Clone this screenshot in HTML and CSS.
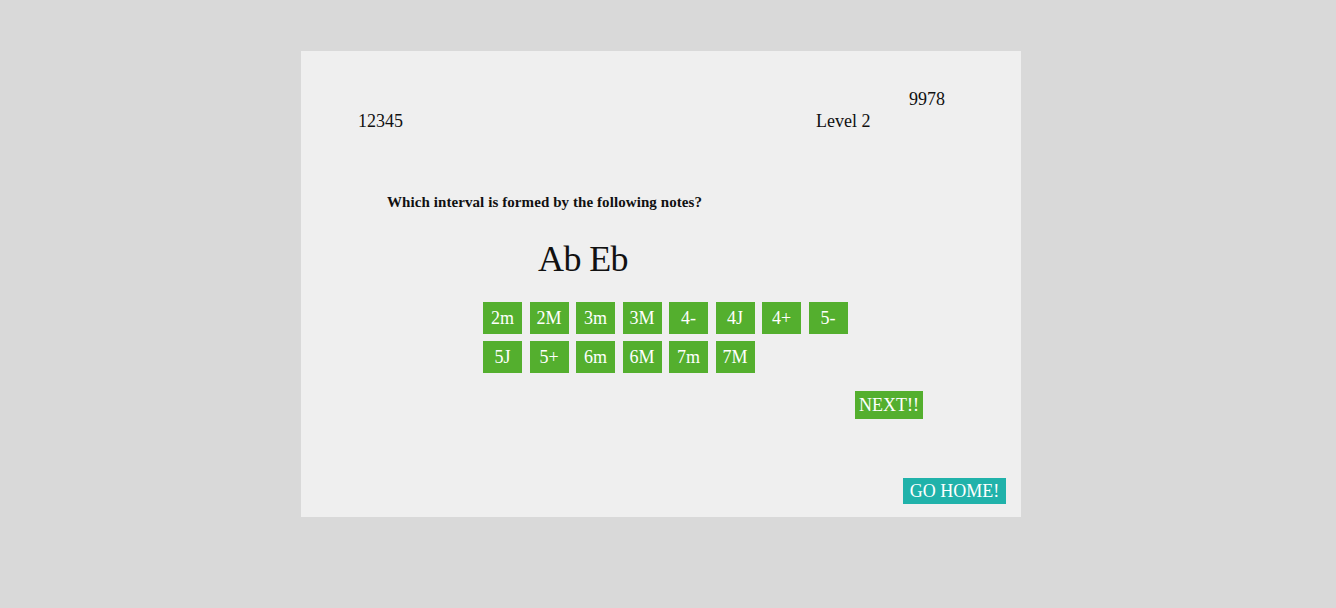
FILE: index.html
```html
<!DOCTYPE html>
<html>
<head>
<meta charset="utf-8">
<link rel="stylesheet" href="styles.css">
</head>
<body>
<div class="card">
  <div class="header">
    <div class="score">12345</div>
    <div class="level">Level 2</div>
    <div class="best">9978</div>
  </div>
  <div class="question">Which interval is formed by the following notes?</div>
  <div class="notes">Ab Eb</div>
  <div class="answers">
    <div class="btn">2m</div>
    <div class="btn">2M</div>
    <div class="btn">3m</div>
    <div class="btn">3M</div>
    <div class="btn">4-</div>
    <div class="btn">4J</div>
    <div class="btn">4+</div>
    <div class="btn">5-</div>
    <div class="btn">5J</div>
    <div class="btn">5+</div>
    <div class="btn">6m</div>
    <div class="btn">6M</div>
    <div class="btn">7m</div>
    <div class="btn">7M</div>
  </div>
  <div class="next-row"><div class="next">NEXT!!</div></div>
  <div class="home-row"><div class="home">GO HOME!</div></div>
</div>
</body>
</html>
```
FILE: styles.css
```css
html, body {
  margin: 0;
  padding: 0;
}
body {
  background: #d9d9d9;
  font-family: "Liberation Serif", "Times New Roman", serif;
  color: #111;
  height: 608px;
}
.card {
  margin: 51px 0 0 301px;
  width: 720px;
  height: 466px;
  box-sizing: border-box;
  background: #efefef;
  padding-top: 38px;
  display: flex;
  flex-direction: column;
}
.header {
  display: flex;
  align-items: flex-end;
  font-size: 18px;
  line-height: 21px;
  padding-left: 57px;
}
.score {
  width: 458px;
}
.level {
  width: 93px;
}
.best {
  align-self: flex-start;
  margin-bottom: 22px;
}
.question {
  margin: 62px 0 0 86px;
  font-weight: bold;
  font-size: 15px;
  line-height: 17px;
  letter-spacing: 0.08px;
}
.notes {
  margin: 28px 0 0 237px;
  font-size: 36px;
  line-height: 41px;
  letter-spacing: -0.6px;
}
.answers {
  margin: 22px 0 0 182px;
  width: 370px;
  display: flex;
  flex-wrap: wrap;
  column-gap: 7.5px;
  row-gap: 7px;
}
.btn {
  width: 39px;
  height: 32px;
  background: #54af2e;
  color: #fff;
  font-size: 18px;
  display: flex;
  align-items: center;
  justify-content: center;
}
.next-row {
  margin: 18px 0 0 554px;
}
.next {
  display: inline-block;
  width: 68px;
  height: 28px;
  line-height: 28px;
  text-align: center;
  background: #54af2e;
  color: #fff;
  font-size: 18px;
}
.home-row {
  margin-top: auto;
  margin-bottom: 13px;
  display: flex;
  justify-content: flex-end;
  padding-right: 15px;
}
.home {
  width: 103px;
  height: 26px;
  line-height: 26px;
  text-align: center;
  background: #20b2aa;
  color: #fff;
  font-size: 18px;
}
```
